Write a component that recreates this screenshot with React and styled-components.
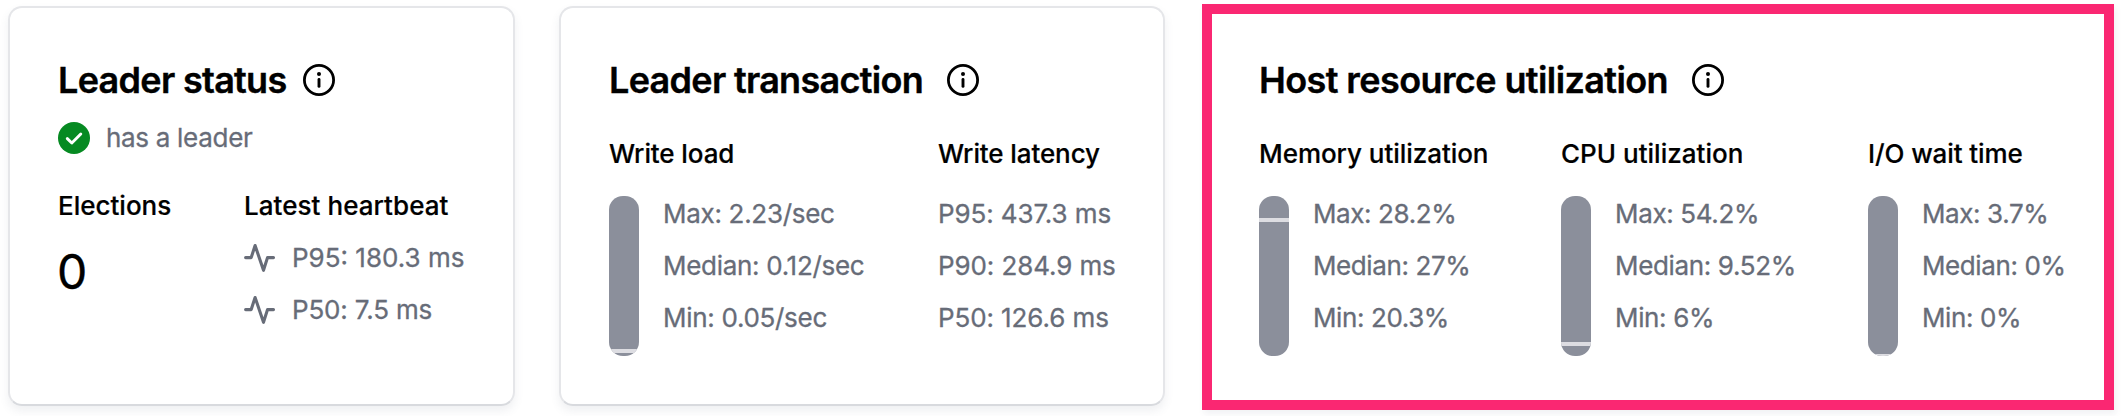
import React from "react";
import styled, { createGlobalStyle } from "styled-components";

const GlobalStyle = createGlobalStyle`
  *, *::before, *::after { box-sizing: border-box; }
  body {
    margin: 0;
    background: #ffffff;
    color: #000000;
    font-family: Inter, "Liberation Sans", sans-serif;
    -webkit-font-smoothing: antialiased;
  }
`;

const Board = styled.main`
  display: flex;
  align-items: flex-start;
  width: 2124px;
  height: 416px;
  padding: 4px 0 0 8px;
  overflow: hidden;
`;

const Card = styled.section`
  display: flex;
  flex-direction: column;
  flex: none;
  width: ${(p) => p.$width}px;
  height: 400px;
  margin: 2px ${(p) => p.$after}px 0 0;
  padding: 48px;
  border: 2px solid #e5e6e9;
  border-bottom-color: #d8dade;
  border-radius: 14px;
  box-shadow: 0 5px 10px rgba(80, 90, 110, 0.09);
`;

const HighlightedCard = styled.section`
  display: flex;
  flex-direction: column;
  flex: none;
  width: 912px;
  height: 406px;
  padding: 42px 0 0 47px;
  border: 10px solid #fa2772;
  box-shadow: 2px 4px 6px rgba(80, 90, 110, 0.08);
`;

const TitleRow = styled.header`
  display: flex;
  align-items: center;
  gap: ${(p) => p.$gap}px;
  height: 48px;
  margin-bottom: ${(p) => p.$after}px;
`;

const Title = styled.h2`
  width: ${(p) => p.$width}px;
  margin: 0;
  font-size: 36px;
  line-height: 48px;
  font-weight: 600;
  -webkit-text-stroke: 0.4px currentColor;
  letter-spacing: ${(p) => p.$tracking}px;
  white-space: nowrap;
`;

const Columns = styled.div`
  display: grid;
  grid-template-columns: ${(p) => p.$columns};
`;

const SubTitle = styled.h3`
  margin: 0 0 ${(p) => p.$after}px;
  font-size: 26px;
  line-height: 36px;
  font-weight: 500;
  -webkit-text-stroke: 0.2px currentColor;
  letter-spacing: ${(p) => p.$tracking ?? -0.1}px;
  white-space: nowrap;
`;

const Line = styled.div`
  display: flex;
  align-items: center;
  gap: 16px;
  height: 36px;
  margin-bottom: ${(p) => p.$after || 0}px;
  color: #676c78;
  font-size: 26px;
  line-height: 36px;
  font-weight: 400;
  -webkit-text-stroke: 0.3px currentColor;
  letter-spacing: ${(p) => p.$tracking ?? -0.1}px;
  white-space: nowrap;
`;

const Stack = styled.div`
  display: flex;
  flex-direction: column;
  gap: 16px;
`;

const Count = styled.div`
  margin-left: -1px;
  font-size: 48px;
  line-height: 64px;
  -webkit-text-stroke: 0.4px currentColor;
`;

const Gauge = styled.div`
  display: flex;
  gap: 24px;
`;

const Bar = styled.div`
  flex: none;
  width: 30px;
  height: 160px;
  border-radius: 14px;
  overflow: hidden;
  background: #8b8f9b;
`;

const Mark = styled.div`
  height: 4px;
  background: #dddde2;
`;

const Icon = styled.svg`
  flex: none;
  width: 32px;
  height: 32px;
  display: block;
`;

const InfoIcon = () => (
  <Icon viewBox="0 0 32 32" fill="none" aria-hidden="true">
    <circle cx="16" cy="16" r="14.6" stroke="#000" strokeWidth="2.8" />
    <circle cx="16" cy="9.9" r="2" fill="#000" />
    <path d="M16 15.4v7" stroke="#000" strokeWidth="2.9" strokeLinecap="round" />
  </Icon>
);

const CheckIcon = () => (
  <Icon viewBox="0 0 32 32" fill="none" aria-hidden="true">
    <circle cx="16" cy="16" r="16" fill="#068a22" />
    <path d="M9.3 16.6l4.5 4.4 9-9" stroke="#fff" strokeWidth="2.9" strokeLinecap="round" strokeLinejoin="round" />
  </Icon>
);

const PulseIcon = () => (
  <Icon viewBox="0 0 32 32" fill="none" aria-hidden="true">
    <path
      d="M1.6 15.6h5.6L11.1 3.5l8.4 24.8 4-12.7h6"
      stroke="#676c78"
      strokeWidth="3.1"
      strokeLinecap="round"
      strokeLinejoin="round"
    />
  </Icon>
);

const CardTitle = ({ text, width, tracking = -0.7, gap = 16, after = 32 }) => (
  <TitleRow $gap={gap} $after={after}>
    <Title $width={width} $tracking={tracking}>{text}</Title>
    <InfoIcon />
  </TitleRow>
);

const Range = ({ title, titleTracking, tracking, max, median, min, unit }) => {
  const offset = ((max - median) / (max - min)) * 160 - 2;
  return (
    <div>
      <SubTitle $after={24} $tracking={titleTracking}>{title}</SubTitle>
      <Gauge>
        <Bar>
          <Mark style={{ marginTop: offset }} />
        </Bar>
        <Stack>
          <Line $tracking={tracking}>Max: {max}{unit}</Line>
          <Line $tracking={tracking}>Median: {median}{unit}</Line>
          <Line $tracking={tracking}>Min: {min}{unit}</Line>
        </Stack>
      </Gauge>
    </div>
  );
};

export default function App() {
  return (
    <>
      <GlobalStyle />
      <Board>
        <Card $width={507} $after={44}>
          <CardTitle text="Leader status" width={229} after={16} />
          <Line $after={32} $tracking={-0.3}>
            <CheckIcon />
            <span>has a leader</span>
          </Line>
          <Columns $columns="186px auto">
            <div>
              <SubTitle $after={16} $tracking={0}>Elections</SubTitle>
              <Count>0</Count>
            </div>
            <div>
              <SubTitle $after={16} $tracking={0.05}>Latest heartbeat</SubTitle>
              <Stack>
                <Line $tracking={0}>
                  <PulseIcon />
                  <span>P95: 180.3 ms</span>
                </Line>
                <Line $tracking={-0.15}>
                  <PulseIcon />
                  <span>P50: 7.5 ms</span>
                </Line>
              </Stack>
            </div>
          </Columns>
        </Card>

        <Card $width={606} $after={37}>
          <CardTitle text="Leader transaction" width={314} gap={24} />
          <Columns $columns="329px auto">
            <Range title="Write load" tracking={-0.3} max={2.23} median={0.12} min={0.05} unit="/sec" />
            <div>
              <SubTitle $after={24}>Write latency</SubTitle>
              <Stack>
                <Line>P95: 437.3 ms</Line>
                <Line>P90: 284.9 ms</Line>
                <Line>P50: 126.6 ms</Line>
              </Stack>
            </div>
          </Columns>
        </Card>

        <HighlightedCard>
          <CardTitle text="Host resource utilization" width={409} gap={24} tracking={-0.59} />
          <Columns $columns="302px 307px auto">
            <Range title="Memory utilization" titleTracking={-0.05} tracking={-0.4} max={28.2} median={27} min={20.3} unit="%" />
            <Range title="CPU utilization" titleTracking={0.02} tracking={-0.35} max={54.2} median={9.52} min={6} unit="%" />
            <Range title="I/O wait time" tracking={-0.4} max={3.7} median={0} min={0} unit="%" />
          </Columns>
        </HighlightedCard>
      </Board>
    </>
  );
}
